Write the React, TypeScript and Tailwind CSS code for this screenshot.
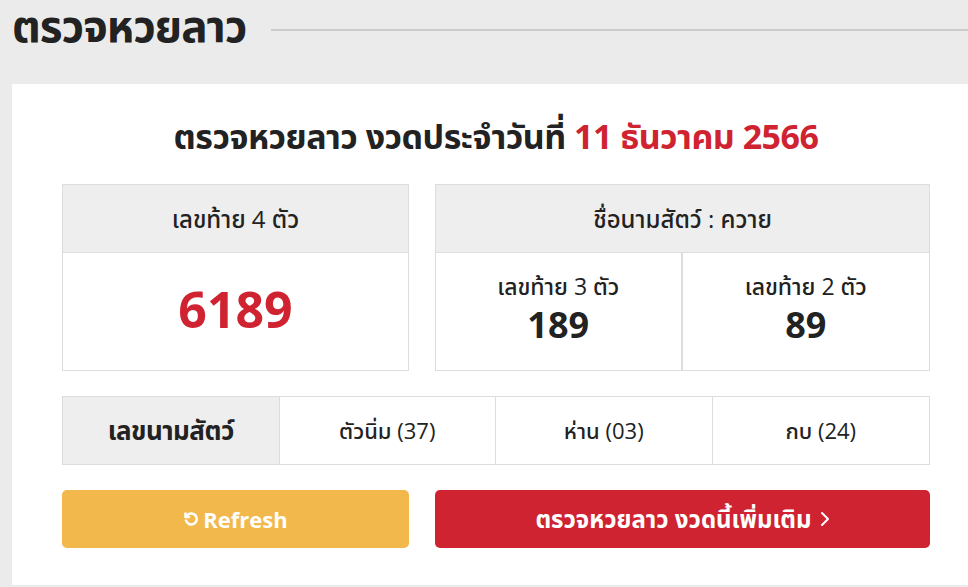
import React from 'react'

const font = { fontFamily: '"Open Sans", "Noto Sans", "Noto Sans Thai", "DejaVu Sans", sans-serif' }

function SmallCell({ label, value }: { label: string; value: string }) {
  return (
    <div className="flex flex-col items-center justify-center pb-[6px]">
      <div className="text-[23px] leading-[32px] font-medium text-[#222]">{label}</div>
      <div className="text-[36px] leading-[46px] font-bold text-[#222]">{value}</div>
    </div>
  )
}

export default function App() {
  return (
    <div className="h-[587px] overflow-hidden bg-[#ebebeb]" style={font}>
      {/* page title */}
      <div className="flex items-center pl-[12px]">
        <h1 className="text-[44px] font-bold leading-[50px] tracking-[-1px] text-[#222] shrink-0">ตรวจหวยลาว</h1>
        <div className="ml-[25px] flex-1 h-[2px] bg-[#cccccc] mt-[10px]" />
      </div>

      {/* card */}
      <div className="ml-[12px] mt-[34px] w-[968px] h-[501px] bg-white px-[50px] pt-[30px]">
        <h2 className="text-center text-[34px] font-bold leading-[44px] text-[#222] tracking-[-0.5px]">
          ตรวจหวยลาว งวดประจำวันที่ <span className="text-[#cf2331]">11 ธันวาคม 2566</span>
        </h2>

        <div className="mt-[26px] grid grid-cols-[347px_1fr] gap-[26px]">
          <div className="border border-[#dddddd] flex flex-col h-[187px]">
            <div className="h-[68px] bg-[#eeeeee] border-b border-[#dddddd] flex items-center justify-center text-[24px] font-medium text-[#222]">
              เลขท้าย 4 ตัว
            </div>
            <div className="flex-1 flex items-center justify-center text-[50px] font-bold text-[#cf2331] pb-[4px]">
              6189
            </div>
          </div>

          <div className="border border-[#dddddd] flex flex-col h-[187px]">
            <div className="h-[68px] bg-[#eeeeee] border-b border-[#dddddd] flex items-center justify-center text-[24px] font-medium text-[#222]">
              ชื่อนามสัตว์ : ควาย
            </div>
            <div className="flex-1 grid grid-cols-2 divide-x-2 divide-[#dddddd]">
              <SmallCell label="เลขท้าย 3 ตัว" value="189" />
              <SmallCell label="เลขท้าย 2 ตัว" value="89" />
            </div>
          </div>
        </div>

        <div className="mt-[25px] grid grid-cols-4 h-[69px] border border-[#dddddd] divide-x divide-[#dddddd] text-[22px] font-medium text-[#222]">
          <div className="bg-[#eeeeee] flex items-center justify-center font-bold text-[26px] tracking-[-0.5px]">เลขนามสัตว์</div>
          <div className="flex items-center justify-center">ตัวนิ่ม (37)</div>
          <div className="flex items-center justify-center">ห่าน (03)</div>
          <div className="flex items-center justify-center">กบ (24)</div>
        </div>

        <div className="mt-[25px] grid grid-cols-[347px_1fr] gap-[26px]">
          <button className="h-[58px] rounded-[5px] bg-[#f2b84b] text-white text-[22px] font-bold flex items-center justify-center gap-[4px]">
            <svg width="16" height="16" viewBox="0 0 16 16" fill="none" stroke="white" strokeWidth="2.6" strokeLinecap="round">
              <path d="M4.2 4.3A5.5 5.5 0 1 1 3 9.5" />
              <path d="M2.5 2.5v3.5h3.5" strokeLinejoin="round" />
            </svg>
            Refresh
          </button>
          <button className="h-[58px] rounded-[5px] bg-[#cf2331] text-white text-[24px] font-bold flex items-center justify-center gap-[8px]">
            ตรวจหวยลาว งวดนี้เพิ่มเติม
            <svg width="10" height="16" viewBox="0 0 10 16" fill="none" stroke="white" strokeWidth="2" strokeLinecap="round" strokeLinejoin="round">
              <path d="M2 2l6 6-6 6" />
            </svg>
          </button>
        </div>
      </div>
    </div>
  )
}
